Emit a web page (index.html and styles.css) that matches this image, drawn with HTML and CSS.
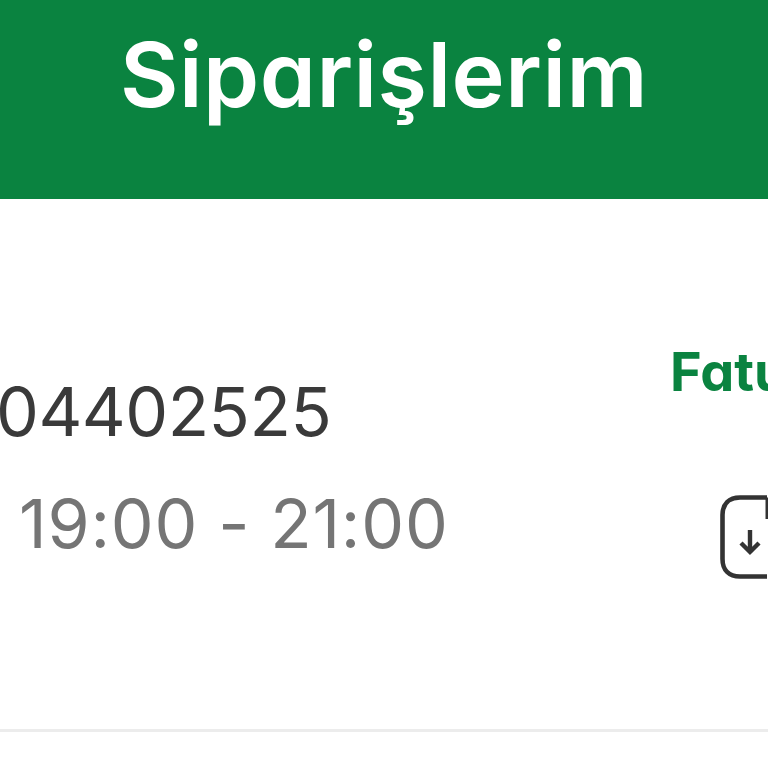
FILE: index.html
```html
<!DOCTYPE html>
<html lang="tr">
<head>
<meta charset="utf-8">
<title>Siparişlerim</title>
<link rel="stylesheet" href="styles.css">
</head>
<body>
<header class="header"><h1 class="title">Siparişlerim</h1></header>
<main class="order">
  <div class="info">
    <div class="number">04402525</div>
    <div class="time">19:00 - 21:00</div>
  </div>
  <div class="invoice">
    <div class="invoice-label">Fatura</div>
    <svg class="invoice-icon" width="64" height="84" viewBox="0 0 64 84" fill="none" stroke="#333" stroke-width="4.6">
      <path d="M47 2.5H20C9 2.5 2.5 9 2.5 20V64C2.5 75 9 81.5 20 81.5H47"/>
      <path d="M47 2.5V24" stroke-width="3"/>
      <path d="M30 35V57M21 48l9 9 9-9" stroke-width="4.4"/>
    </svg>
  </div>
</main>
<div class="rule"></div>
</body>
</html>
```
FILE: styles.css
```css
html, body { margin: 0; height: 768px; overflow: hidden; background: #fff; }
body { font-family: "Inter", "Lato", sans-serif; font-feature-settings: "cv11"; width: 768px; }
.header { height: 199px; background: #0a8340; display: flex; justify-content: center; align-items: center; }
.title { margin: 0; color: #fff; font-size: 90px; font-weight: 600; line-height: 1; padding-bottom: 50px; letter-spacing: 0.5px; }
.order { height: 530px; display: flex; justify-content: space-between; overflow: hidden; }
.info { padding-top: 172px; margin-left: -4px; }
.number { font-size: 68px; color: #3a3a3a; line-height: 80px; letter-spacing: -0.5px; }
.time { font-size: 68px; color: #757575; line-height: 80px; margin-top: 32px; padding-left: 23px; letter-spacing: 0.8px; }
.invoice { width: 98px; flex: none; padding-top: 140px; overflow: hidden; }
.invoice-label { font-size: 54px; font-weight: 700; color: #0a8340; white-space: nowrap; line-height: 66px; }
.invoice-icon { display: block; margin: 90px 0 0 50px; }
.rule { height: 3px; background: #ececec; }
```
